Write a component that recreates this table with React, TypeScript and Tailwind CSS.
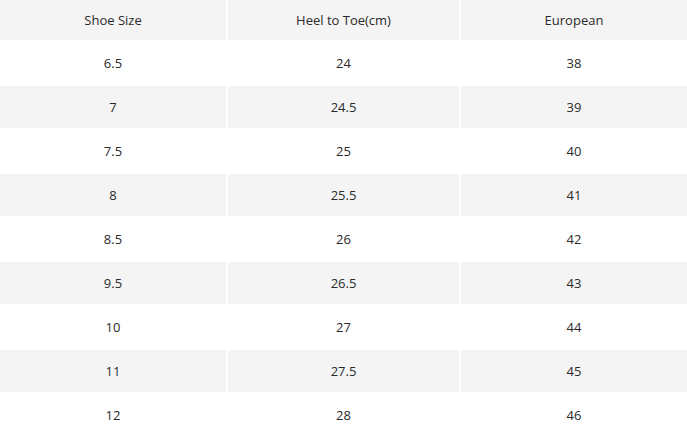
import React from "react";

const rows: [string, string, string][] = [
  ["6.5", "24", "38"],
  ["7", "24.5", "39"],
  ["7.5", "25", "40"],
  ["8", "25.5", "41"],
  ["8.5", "26", "42"],
  ["9.5", "26.5", "43"],
  ["10", "27", "44"],
  ["11", "27.5", "45"],
  ["12", "28", "46"],
];

export default function App() {
  return (
    <div
      className="w-[687px] h-[438px] bg-white overflow-hidden flex flex-col gap-[2px] text-[13px] text-[#2a2a2a]"
      style={{ fontFamily: '"Open Sans", sans-serif' }}
    >
      <div className="grid grid-cols-[226px_231px_226px] gap-[2px] h-[40px] shrink-0">
        {["Shoe Size", "Heel to Toe(cm)", "European"].map((h) => (
          <div key={h} className="bg-[#f4f4f4] flex items-center justify-center pt-[2px]">
            {h}
          </div>
        ))}
      </div>
      {rows.map((r, i) => (
        <div key={i} className="grid grid-cols-[226px_231px_226px] gap-[2px] h-[42px] shrink-0">
          {r.map((c, j) => (
            <div
              key={j}
              className={`${i % 2 === 1 ? "bg-[#f4f4f4]" : "bg-white"} flex items-center justify-center pt-[2px]`}
            >
              {c}
            </div>
          ))}
        </div>
      ))}
    </div>
  );
}
